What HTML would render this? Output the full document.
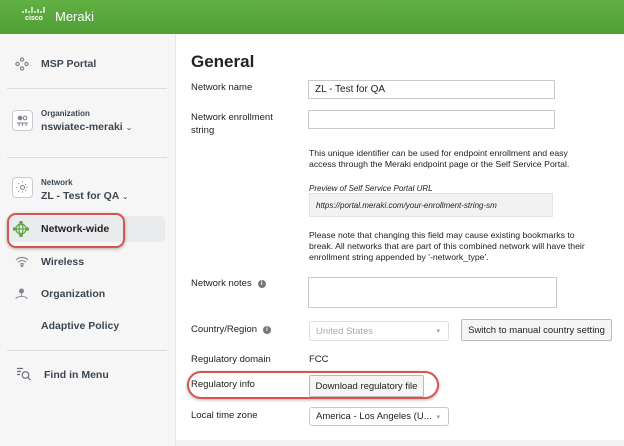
<!DOCTYPE html>
<html><head><style>
*{box-sizing:border-box;margin:0;padding:0}
body{width:624px;height:446px;overflow:hidden;background:#fff;font-family:"Liberation Sans",sans-serif;color:#222;position:relative}
.a{position:absolute}
.hdr{left:0;top:0;width:624px;height:34px;background:linear-gradient(#62b043,#4f9f36)}
.side{left:0;top:34px;width:176px;height:412px;background:#f6f6f7;border-right:1px solid #e6e6e8}
.sl{font-size:10.5px;font-weight:bold;color:#3d4752}
.hr{height:1px;background:#dcdde0;left:7px;width:160px}
.lab{font-size:9.5px;color:#222;left:191px}
.inp{border:1px solid #c9c9c9;background:#fff;font-size:10px;padding:0 6px;display:flex;align-items:center}
.txt{font-size:8.7px;color:#222;left:309px;line-height:11px}
.ibox{left:12px;width:21px;height:21px;border:1px solid #c8cbd0;border-radius:4px;background:#fff}
.info{display:inline-block;width:8px;height:8px;border-radius:50%;background:#777;color:#fff;font-size:6px;text-align:center;line-height:8px;font-weight:bold;margin-left:6px;vertical-align:1px}
.btn{border:1px solid #bbb;background:#f5f5f5;font-size:9.5px;display:flex;align-items:center;justify-content:center;border-radius:2px}
.sel{border:1px solid #c9c9c9;border-radius:3px;font-size:9.5px;padding-left:6px;display:flex;align-items:center}
.sel:after{content:"▾";position:absolute;right:8px;font-size:7px;color:#999}
</style></head><body>
<div class="a hdr"></div>
<svg class="a" style="left:22px;top:7px" width="24" height="8" viewBox="0 0 24 8"><g stroke="#fff" stroke-width="1.3"><line x1="1" y1="4" x2="1" y2="6"/><line x1="4" y1="2" x2="4" y2="6"/><line x1="7" y1="4" x2="7" y2="6"/><line x1="10" y1="0" x2="10" y2="6"/><line x1="13" y1="4" x2="13" y2="6"/><line x1="16" y1="2" x2="16" y2="6"/><line x1="19" y1="4" x2="19" y2="6"/><line x1="22" y1="0" x2="22" y2="6"/></g></svg>
<div class="a" style="left:22px;top:15px;color:#fff;font-size:7px;font-weight:bold;width:24px;text-align:center">cisco</div>
<div class="a" style="left:55px;top:9px;color:#fff;font-size:13px">Meraki</div>
<div class="a side"></div>
<svg class="a" style="left:15px;top:57px" width="14" height="14" viewBox="0 0 14 14" fill="none" stroke="#7d848d" stroke-width="1.2"><circle cx="7" cy="2.5" r="1.6"/><circle cx="2.5" cy="7" r="1.6"/><circle cx="11.5" cy="7" r="1.6"/><circle cx="7" cy="11.5" r="1.6"/></svg>
<div class="a sl" style="left:41px;top:58px">MSP Portal</div>
<div class="a hr" style="top:88px"></div>
<div class="a ibox" style="top:110px"></div>
<svg class="a" style="left:16px;top:114px" width="13" height="13" viewBox="0 0 13 13" fill="none" stroke="#7d848d" stroke-width="1.1"><circle cx="4" cy="4" r="1.8" fill="#7d848d"/><circle cx="9" cy="4" r="1.8"/><path d="M1 9h11M3 9v3M6.5 9v3M10 9v3"/></svg>
<div class="a" style="left:41px;top:109px;font-size:8px;font-weight:bold;color:#3d4752">Organization</div>
<div class="a sl" style="left:41px;top:121px">nswiatec-meraki <span style="font-weight:normal;font-size:8px">⌄</span></div>
<div class="a hr" style="top:157px"></div>
<div class="a ibox" style="top:177px"></div>
<svg class="a" style="left:16px;top:181px" width="13" height="13" viewBox="0 0 13 13" fill="none" stroke="#7d848d" stroke-width="1.1"><circle cx="6.5" cy="6.5" r="2"/><path d="M6.5 0.5v2M6.5 10.5v2M0.5 6.5h2M10.5 6.5h2M2.3 2.3l1.4 1.4M9.3 9.3l1.4 1.4M2.3 10.7l1.4-1.4M9.3 3.7l1.4-1.4" stroke-dasharray="1 1"/></svg>
<div class="a" style="left:41px;top:178px;font-size:8px;font-weight:bold;color:#3d4752">Network</div>
<div class="a sl" style="left:41px;top:190px">ZL - Test for QA <span style="font-weight:normal;font-size:8px">⌄</span></div>
<div class="a" style="left:8px;top:216px;width:157px;height:26px;background:#eaebed;border-radius:4px"></div>
<div class="a" style="left:7px;top:213px;width:118px;height:35px;border:2px solid #d9534f;border-radius:9px;box-shadow:0 1px 3px rgba(0,0,0,.3)"></div>
<svg class="a" style="left:13px;top:221px" width="16" height="16" viewBox="0 0 16 16" fill="none" stroke="#5aa83c" stroke-width="1.2"><circle cx="8" cy="8" r="5"/><ellipse cx="8" cy="8" rx="2" ry="5"/><path d="M3 8h10"/><circle cx="8" cy="1.5" r="1.2" fill="#5aa83c"/><circle cx="8" cy="14.5" r="1.2" fill="#5aa83c"/><circle cx="1.5" cy="8" r="1.2" fill="#5aa83c"/><circle cx="14.5" cy="8" r="1.2" fill="#5aa83c"/></svg>
<div class="a sl" style="left:41px;top:223px;color:#222">Network-wide</div>
<svg class="a" style="left:15px;top:256px" width="14" height="11" viewBox="0 0 14 11" fill="none" stroke="#8a9099" stroke-width="1.2"><path d="M1 4a8.5 8.5 0 0 1 12 0M3 6.3a5.5 5.5 0 0 1 8 0M5 8.5a2.5 2.5 0 0 1 4 0"/><circle cx="7" cy="10" r="0.8" fill="#8a9099"/></svg>
<div class="a sl" style="left:41px;top:256px">Wireless</div>
<svg class="a" style="left:15px;top:287px" width="13" height="13" viewBox="0 0 13 13" fill="none" stroke="#8a9099" stroke-width="1.1"><circle cx="6.5" cy="4" r="2.5" fill="#7d848d" stroke="none"/><path d="M6.5 6.5v3M1 12c0-2 2-2.5 5.5-2.5S12 10 12 12"/></svg>
<div class="a sl" style="left:41px;top:288px">Organization</div>
<div class="a sl" style="left:41px;top:320px">Adaptive Policy</div>
<div class="a hr" style="top:350px"></div>
<svg class="a" style="left:16px;top:367px" width="16" height="14" viewBox="0 0 16 14" fill="none" stroke="#6a7079" stroke-width="1.2"><path d="M1 1.5h6M1 4.5h4M1 7.5h3"/><circle cx="9.5" cy="8" r="3.3"/><path d="M12 10.5l2.5 2.5"/></svg>
<div class="a sl" style="left:44px;top:369px">Find in Menu</div>

<div class="a" style="left:191px;top:52px;font-size:17px;font-weight:bold;color:#222">General</div>
<div class="a lab" style="top:82px">Network name</div>
<div class="a inp" style="left:308px;top:80px;width:247px;height:19px">ZL - Test for QA</div>
<div class="a lab" style="top:111px;line-height:13px">Network enrollment<br>string</div>
<div class="a inp" style="left:308px;top:110px;width:247px;height:19px"></div>
<div class="a txt" style="top:148px">This unique identifier can be used for endpoint enrollment and easy<br>access through the Meraki endpoint page or the Self Service Portal.</div>
<div class="a txt" style="top:183px;font-style:italic;font-size:8px">Preview of Self Service Portal URL</div>
<div class="a" style="left:309px;top:193px;width:244px;height:24px;background:#f2f2f2;border:1px solid #e4e4e4;font-size:8px;font-style:italic;padding:7px 6px">https://portal.meraki.com/your-enrollment-string-sm</div>
<div class="a txt" style="top:230px">Please note that changing this field may cause existing bookmarks to<br>break. All networks that are part of this combined network will have their<br>enrollment string appended by '-network_type'.</div>
<div class="a lab" style="top:278px">Network notes<span class="info">i</span></div>
<div class="a inp" style="left:308px;top:277px;width:249px;height:31px"></div>
<div class="a lab" style="top:324px">Country/Region<span class="info">i</span></div>
<div class="a sel" style="left:309px;top:321px;width:140px;height:20px;color:#aaa;border-color:#ddd">United States</div>
<div class="a btn" style="left:461px;top:319px;width:151px;height:22px">Switch to manual country setting</div>
<div class="a lab" style="top:354px">Regulatory domain</div>
<div class="a lab" style="left:309px;top:354px">FCC</div>
<div class="a" style="left:187px;top:371px;width:252px;height:28px;border:2px solid #d9534f;border-radius:14px;box-shadow:0 1px 3px rgba(0,0,0,.3)"></div>
<div class="a lab" style="top:379px">Regulatory info</div>
<div class="a btn" style="left:309px;top:375px;width:115px;height:22px">Download regulatory file</div>
<div class="a lab" style="top:410px">Local time zone</div>
<div class="a sel" style="left:309px;top:407px;width:140px;height:19px">America - Los Angeles (U...</div>
<div class="a" style="left:176px;top:440px;width:448px;height:6px;background:#f3f3f4"></div>
</body></html>
